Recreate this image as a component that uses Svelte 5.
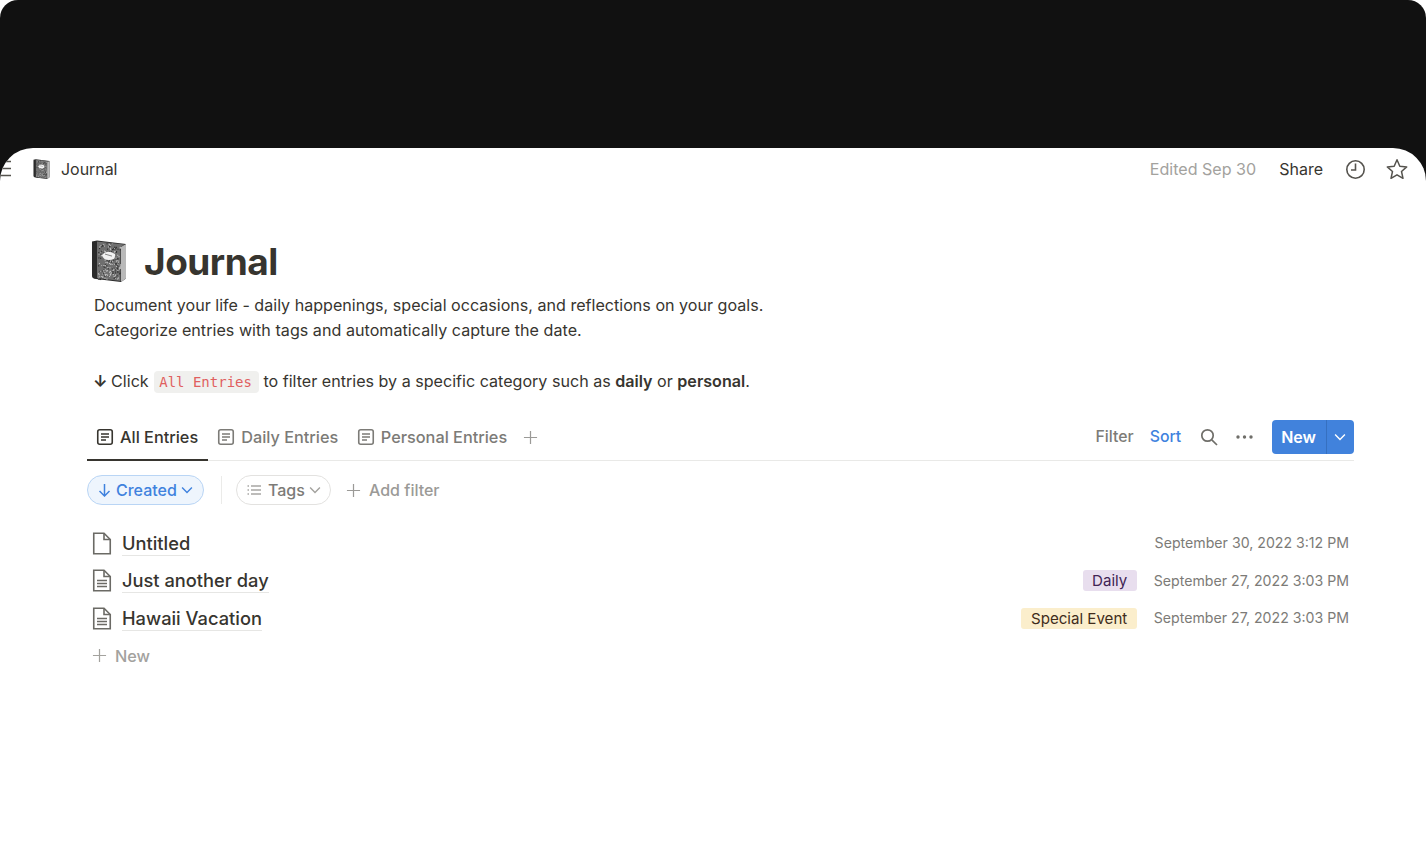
<script>
	const tabs = [
		{ label: 'All Entries', active: true },
		{ label: 'Daily Entries', active: false },
		{ label: 'Personal Entries', active: false }
	];

	const rows = [
		{ title: 'Untitled', blank: true, date: 'September 30, 2022 3:12 PM' },
		{ title: 'Just another day', tag: 'Daily', tagClass: 'purple', date: 'September 27, 2022 3:03 PM' },
		{ title: 'Hawaii Vacation', tag: 'Special Event', tagClass: 'yellow', date: 'September 27, 2022 3:03 PM' }
	];

	// marble speckle for the composition book cover
	let seed = 7;
	function rnd() {
		seed = (seed * 16807) % 2147483647;
		return seed / 2147483647;
	}
	const specks = [];
	for (let i = 0; i < 260; i++) {
		specks.push({ x: 7 + rnd() * 27, y: 3 + rnd() * 36, light: rnd() > 0.5 });
	}
</script>

{#snippet book(size)}
	<svg width={size} height={size * 1.2} viewBox="0 0 36 43">
		<path d="M1 1.5 L6 0.5 L35 4 V38.5 L30 42 L5 39 Q1 38.5 1 36 Z" fill="#2b2b2b" />
		<path d="M6 1.5 L33.5 4.5 L29.5 7 V41 L6 38 Z" fill="#6f6f6f" />
		<path d="M30 7 L35 4 V38.5 L30 42 Z" fill="#b9b9b9" />
		{#each specks as s}
			{#if s.x < 29 && s.y < 40}
				<rect x={s.x} y={s.y} width="1.1" height="1.1" fill={s.light ? '#c9c9c9' : '#2c2c2c'} />
			{/if}
		{/each}
		<path d="M11 15 Q16 9 24 14 Q25 20 18 20 Q12 20 11 15 Z" fill="#f2f2f2" />
		<path d="M14 14 L21 16" stroke="#888" stroke-width="1" />
	</svg>
{/snippet}

{#snippet tableIcon()}
	<svg width="18" height="18" viewBox="0 0 18 18" fill="none" stroke="currentColor" stroke-width="1.6">
		<rect x="1.75" y="1.75" width="14.5" height="14.5" rx="2" />
		<path d="M5 6h8M5 9h8M5 12h5" />
	</svg>
{/snippet}

{#snippet chevron(w)}
	<svg class="chev" width={w} height={w} viewBox="0 0 10 10" fill="none" stroke="currentColor" stroke-width="1">
		<path d="M1.5 3.2 L5 6.8 L8.5 3.2" />
	</svg>
{/snippet}

{#snippet plus(size)}
	<svg width={size} height={size} viewBox="0 0 16 16" fill="none" stroke="currentColor" stroke-width="1.3">
		<path d="M8 1v14M1 8h14" />
	</svg>
{/snippet}

<div class="device">
	<div class="window">
		<header class="topbar">
			<div class="crumbs">
				<svg class="burger" width="12" height="18" viewBox="0 0 12 18" fill="none" stroke="#55534e" stroke-width="1.7">
					<path d="M0 1.5h11M0 8.5h11M0 15.5h11" />
				</svg>
				<span class="crumb-icon">{@render book(17)}</span>
				<span class="crumb-text">Journal</span>
			</div>
			<div class="actions">
				<span class="edited">Edited Sep 30</span>
				<span class="share">Share</span>
				<svg width="21" height="21" viewBox="0 0 21 21" fill="none" stroke="#55534e" stroke-width="1.6">
					<circle cx="10.5" cy="10.5" r="8.7" />
					<path d="M10.5 4.5v6.5h-4.5" />
				</svg>
				<svg width="22" height="22" viewBox="0 0 22 22" fill="none" stroke="#55534e" stroke-width="1.5" stroke-linejoin="round">
					<path d="M11 1.8 L13.8 8.2 L20.7 8.9 L15.5 13.5 L17 20.3 L11 16.8 L5 20.3 L6.5 13.5 L1.3 8.9 L8.2 8.2 Z" />
				</svg>
			</div>
		</header>

		<main class="page">
			<div class="title-row">
				<span class="title-icon">{@render book(36)}</span>
				<h1>Journal</h1>
			</div>

			<div class="intro">
				<p>Document your life - daily happenings, special occasions, and reflections on your goals.</p>
				<p class="line-two">Categorize entries with tags and automatically capture the date.</p>
				<p class="spaced"><span class="arrow">↓</span> Click <code>All Entries</code> to filter entries by a specific category such as <b>daily</b> or <b>personal</b>.</p>
			</div>

			<div class="viewbar">
				<div class="tabs">
					{#each tabs as tab}
						<div class="tab" class:active={tab.active}>
							{@render tableIcon()}
							<span>{tab.label}</span>
						</div>
					{/each}
					<span class="add-view">{@render plus(15)}</span>
				</div>
				<div class="tools">
					<span class="tool filter">Filter</span>
					<span class="tool sort">Sort</span>
					<svg width="18" height="18" viewBox="0 0 18 18" fill="none" stroke="#6f6e69" stroke-width="1.7">
						<circle cx="7.5" cy="7.5" r="5.7" />
						<path d="M11.8 11.8 L17 17" />
					</svg>
					<svg class="dots" width="17" height="4" viewBox="0 0 17 4" fill="#6f6e69">
						<circle cx="2" cy="2" r="1.7" />
						<circle cx="8.5" cy="2" r="1.7" />
						<circle cx="15" cy="2" r="1.7" />
					</svg>
					<div class="new-btn">
						<span class="new-label">New</span>
						<span class="new-arrow">{@render chevron(14)}</span>
					</div>
				</div>
			</div>

			<div class="filters">
				<div class="pill created">
					<svg width="13" height="14" viewBox="0 0 13 14" fill="none" stroke="currentColor" stroke-width="1.5">
						<path d="M6.5 1v12M1.5 8 L6.5 13 L11.5 8" />
					</svg>
					<span>Created</span>
					{@render chevron(14)}
				</div>
				<div class="divider"></div>
				<div class="pill tags">
					<svg width="14" height="12" viewBox="0 0 14 12" fill="none" stroke="currentColor" stroke-width="1.2">
						<path d="M4 2h10M4 6h10M4 10h10M0.5 2h1.5M0.5 6h1.5M0.5 10h1.5" />
					</svg>
					<span>Tags</span>
					{@render chevron(14)}
				</div>
				<div class="add-filter">
					{@render plus(15)}
					<span>Add filter</span>
				</div>
			</div>

			<div class="rows">
				{#each rows as row}
					<div class="row">
						<svg class="doc" width="20" height="23" viewBox="0 0 20 23" fill="none" stroke="#6b6a65" stroke-width="1.6">
							<path d="M1.75 1.25 H12 L18.25 7.5 V21.75 H1.75 Z" />
							<path d="M12 1.25 V7.5 H18.25" />
							{#if !row.blank}
								<path d="M5 11.5h10M5 14.5h10M5 17.5h10" stroke-width="1.3" />
							{/if}
						</svg>
						<span class="row-title">{row.title}</span>
						<div class="row-meta">
							{#if row.tag}
								<span class="tag {row.tagClass}">{row.tag}</span>
							{/if}
							<span class="date">{row.date}</span>
						</div>
					</div>
				{/each}
				<div class="row add-row">
					{@render plus(15)}
					<span>New</span>
				</div>
			</div>
		</main>
	</div>
</div>

<style>
	:global(body) {
		margin: 0;
		background: #fff;
	}

	.device {
		height: 859px;
		box-sizing: border-box;
		padding-top: 148px;
		background: #111;
		border-radius: 18px 18px 0 0;
		overflow: hidden;
		font-family: Inter, "Noto Sans", sans-serif;
		color: #37352f;
	}

	.window {
		height: 711px;
		background: #fff;
		border-radius: 33px 33px 0 0;
		overflow: hidden;
	}

	.topbar {
		display: flex;
		align-items: center;
		justify-content: space-between;
		height: 42px;
		padding-right: 18px;
	}

	.crumbs {
		display: flex;
		align-items: center;
	}

	.burger {
		margin-right: 21px;
	}

	.crumb-icon {
		display: flex;
		margin-right: 11px;
	}

	.crumb-text {
		font-size: 16px;
		letter-spacing: -0.05px;
	}

	.actions {
		display: flex;
		align-items: center;
	}

	.edited {
		font-size: 16.1px;
		color: #a3a29e;
		margin-right: 23px;
	}

	.share {
		font-size: 16px;
		margin-right: 22px;
	}

	.actions svg:last-child {
		margin-left: 20px;
	}

	.page {
		padding: 0 72px 0 87px;
	}

	.title-row {
		display: flex;
		align-items: center;
		height: 60px;
		margin-top: 42px;
		margin-left: 4px;
	}

	.title-icon {
		display: flex;
		margin-right: 17px;
	}

	h1 {
		margin: 0;
		font-size: 37px;
		font-weight: 700;
		letter-spacing: -0.5px;
		line-height: 60px;
	}

	.intro {
		margin-left: 7px;
		padding-top: 1px;
		font-size: 16.1px;
		line-height: 25.3px;
	}

	.intro p {
		margin: 0;
	}

	.line-two {
		letter-spacing: 0.03px;
	}

	.spaced {
		margin-top: 25.5px !important;
	}

	.arrow {
		font-weight: 700;
		margin-left: -1px;
		margin-right: -1px;
	}

	code {
		font-family: "DejaVu Sans Mono", monospace;
		font-size: 14px;
		color: #e05f5f;
		background: #f0f0ee;
		padding: 3px 7px 3px 5px;
		border-radius: 4px;
		margin-left: 1px;
	}

	b {
		font-weight: 600;
	}

	.viewbar {
		display: flex;
		justify-content: space-between;
		align-items: center;
		height: 46px;
		margin-top: 19px;
		border-bottom: 1px solid #e9e9e7;
	}

	.tabs {
		display: flex;
		align-items: center;
		height: 100%;
	}

	.tab {
		display: flex;
		align-items: center;
		gap: 6px;
		box-sizing: border-box;
		height: 47px;
		padding: 0 9.5px 0 9px;
		font-size: 16.3px;
		font-weight: 500;
		color: #7c7b77;
		border-bottom: 2px solid transparent;
		margin-bottom: -1px;
	}

	.tab.active {
		padding-right: 10px;
		color: #37352f;
		border-bottom-color: #37352f;
	}

	.add-view {
		display: flex;
		color: #9b9a97;
		margin-left: 6px;
	}

	.tools {
		display: flex;
		align-items: center;
		font-size: 15.8px;
		margin-bottom: 1px;
	}

	.tool {
		color: #7c7b77;
		font-weight: 500;
		margin-right: 19px;
	}

	.filter {
		margin-right: 16px;
	}

	.sort {
		color: #3f82de;
	}

	.dots {
		margin-left: 18px;
		margin-right: 19px;
	}

	.new-btn {
		display: flex;
		align-items: stretch;
		height: 34px;
		background: #4182dc;
		border-radius: 4px;
		color: #fff;
	}

	.new-label {
		display: flex;
		align-items: center;
		padding: 0 10px 0 9px;
		font-weight: 600;
		font-size: 16px;
	}

	.new-arrow {
		display: flex;
		align-items: center;
		padding: 0 7px 0 6px;
		border-left: 1px solid #3670c0;
	}

	.filters {
		display: flex;
		align-items: center;
		height: 30px;
		margin-top: 14px;
		font-size: 16px;
	}

	.pill {
		display: flex;
		align-items: center;
		height: 30px;
		box-sizing: border-box;
		border-radius: 15px;
		border: 1px solid #e3e2e0;
	}

	.pill svg {
		flex: none;
	}

	.created {
		gap: 5px;
		padding-left: 10px;
		width: 117px;
		color: #3f82de;
		background: #eef5fd;
		border-color: #b9d5f5;
		font-weight: 500;
	}

	.created .chev {
		margin-left: -2px;
	}

	.divider {
		width: 1px;
		height: 28px;
		background: #ebebe9;
		margin: 0 14px 0 17px;
	}

	.tags {
		gap: 7px;
		padding-left: 10px;
		width: 95px;
		color: #7c7b77;
		font-weight: 500;
	}

	.tags .chev {
		margin-left: -4px;
		color: #a3a29e;
	}

	.add-filter {
		display: flex;
		align-items: center;
		gap: 8px;
		margin-left: 15px;
		color: #9b9a97;
		font-weight: 500;
	}

	.rows {
		margin-top: 19px;
	}

	.row {
		display: flex;
		align-items: center;
		height: 37.5px;
		padding-left: 5px;
	}

	.doc {
		flex: none;
	}

	.row-title {
		margin-left: 10px;
		font-size: 18.3px;
		font-weight: 500;
		border-bottom: 1px solid #e6e6e4;
		line-height: 24px;
	}

	.row-meta {
		display: flex;
		align-items: center;
		gap: 17px;
		margin-left: auto;
		padding-right: 5px;
	}

	.tag {
		font-size: 15.1px;
		line-height: 21px;
		padding: 0 9.5px;
		border-radius: 3px;
	}

	.purple {
		background: #e8deee;
		color: #412454;
	}

	.yellow {
		background: #fbeecc;
		color: #402c1b;
	}

	.date {
		font-size: 14.15px;
		color: #7c7b77;
		margin-bottom: 1px;
	}

	.add-row {
		gap: 8px;
		color: #a3a29e;
		font-size: 16.3px;
		font-weight: 500;
	}
</style>
